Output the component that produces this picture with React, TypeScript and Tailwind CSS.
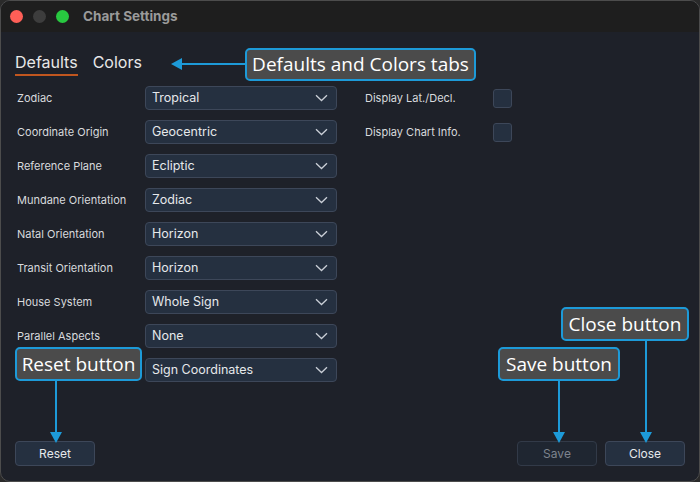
import React from "react"

const rows = [
  { label: "Zodiac", value: "Tropical" },
  { label: "Coordinate Origin", value: "Geocentric" },
  { label: "Reference Plane", value: "Ecliptic" },
  { label: "Mundane Orientation", value: "Zodiac" },
  { label: "Natal Orientation", value: "Horizon" },
  { label: "Transit Orientation", value: "Horizon" },
  { label: "House System", value: "Whole Sign" },
  { label: "Parallel Aspects", value: "None" },
  { label: "", value: "Sign Coordinates" },
]

function Chevron() {
  return (
    <svg width="13" height="8" viewBox="0 0 13 8" fill="none">
      <path d="M1 1.2 L6.5 6.5 L12 1.2" stroke="#c9ced6" strokeWidth="1.3" />
    </svg>
  )
}

function Select({ value }: { value: string }) {
  return (
    <div className="flex items-center justify-between w-[192px] h-[24px] rounded-[4px] border border-[#3d4759] bg-[#253040] pl-[6px] pr-[8px]">
      <span className="text-[12.5px] text-[#e6e8eb]">{value}</span>
      <Chevron />
    </div>
  )
}

function Callout({ text, className }: { text: string; className: string }) {
  return (
    <div
      className={
        "absolute flex items-center justify-center rounded-[5px] border-2 border-[#1d9ad8] bg-[#4b4b4b] text-white text-[19px] leading-none " +
        className
      }
      style={{ fontFamily: '"Open Sans", sans-serif' }}
    >
      {text}
    </div>
  )
}

function DownArrow({ className }: { className: string }) {
  return (
    <div className={"absolute flex flex-col items-center " + className}>
      <div className="w-[2px] flex-1 bg-[#1d9ad8]" />
      <svg width="12" height="11" viewBox="0 0 12 11">
        <path d="M0 0 L12 0 L6 11 Z" fill="#1d9ad8" />
      </svg>
    </div>
  )
}

export default function App() {
  return (
    <div className="w-[700px] h-[482px] bg-[#2a2a2a]" style={{ fontFamily: "Inter, sans-serif" }}>
      <div className="relative flex flex-col w-full h-full rounded-[10px] border border-[#4c4c4c] overflow-hidden bg-[#1e2129]">
        {/* TITLE BAR */}
        <div className="flex items-center h-[31px] bg-[#1e1e1e] pl-[9px] gap-[10px]">
          <div className="w-[13px] h-[13px] rounded-full bg-[#fe5f57]" />
          <div className="w-[13px] h-[13px] rounded-full bg-[#3d3d3d]" />
          <div className="w-[13px] h-[13px] rounded-full bg-[#28c840]" />
          <span className="ml-[4px] text-[13.5px] font-bold text-[#9a9a9a]">Chart Settings</span>
        </div>

        {/* BODY */}
        <div className="flex flex-col flex-1 px-[14px] pb-[15px]">
          {/* TABS */}
          <div className="flex items-end gap-[15px] mt-[19px]">
            <div className="border-b-2 border-[#c0561f] pb-[1px] text-[16px] leading-[22px] text-[#e8e8e8]">Defaults</div>
            <div className="pb-[3px] text-[16px] leading-[22px] text-[#e8e8e8]">Colors</div>
          </div>

          <div className="flex mt-[10px]">
            {/* LEFT COLUMN */}
            <div className="flex flex-col gap-[10px]">
              {rows.map((r, i) => (
                <div key={i} className="flex items-center h-[24px]">
                  <div className="w-[130px] pl-[2px] text-[11px] text-[#d8dadd]">{r.label}</div>
                  <Select value={r.value} />
                </div>
              ))}
            </div>

            {/* RIGHT COLUMN */}
            <div className="flex flex-col gap-[10px] ml-[28px]">
              {["Display Lat./Decl.", "Display Chart Info."].map((t) => (
                <div key={t} className="flex items-center h-[24px]">
                  <div className="w-[128px] text-[11px] text-[#d8dadd]">{t}</div>
                  <div className="w-[19px] h-[19px] rounded-[3px] border border-[#3d4759] bg-[#253040]" />
                </div>
              ))}
            </div>
          </div>

          {/* BUTTONS */}
          <div className="flex mt-auto">
            <div className="flex items-center justify-center w-[80px] h-[25px] rounded-[4px] border border-[#3d4759] bg-[#253040] text-[12px] text-[#e6e8eb]">
              Reset
            </div>
            <div className="ml-auto flex gap-[8px]">
              <div className="flex items-center justify-center w-[80px] h-[25px] rounded-[4px] border border-[#323a48] bg-[#1f2631] text-[12px] text-[#7d838d]">
                Save
              </div>
              <div className="flex items-center justify-center w-[80px] h-[25px] rounded-[4px] border border-[#3d4759] bg-[#253040] text-[12px] text-[#e6e8eb]">
                Close
              </div>
            </div>
          </div>
        </div>

        {/* ANNOTATIONS */}
        <div className="absolute left-[170px] top-[57px] flex items-center w-[76px]">
          <svg width="11" height="12" viewBox="0 0 11 12">
            <path d="M0 6 L11 0 L11 12 Z" fill="#1d9ad8" />
          </svg>
          <div className="h-[2px] flex-1 bg-[#1d9ad8]" />
        </div>
        <Callout text="Defaults and Colors tabs" className="left-[244px] top-[47px] w-[231px] h-[33px]" />

        <Callout text="Reset button" className="left-[14px] top-[346px] w-[127px] h-[34px]" />
        <DownArrow className="left-[49px] top-[380px] h-[62px]" />

        <Callout text="Save button" className="left-[497px] top-[346px] w-[122px] h-[34px]" />
        <DownArrow className="left-[552px] top-[380px] h-[62px]" />

        <Callout text="Close button" className="left-[560px] top-[306px] w-[128px] h-[34px]" />
        <DownArrow className="left-[639px] top-[340px] h-[102px]" />
      </div>
    </div>
  )
}
